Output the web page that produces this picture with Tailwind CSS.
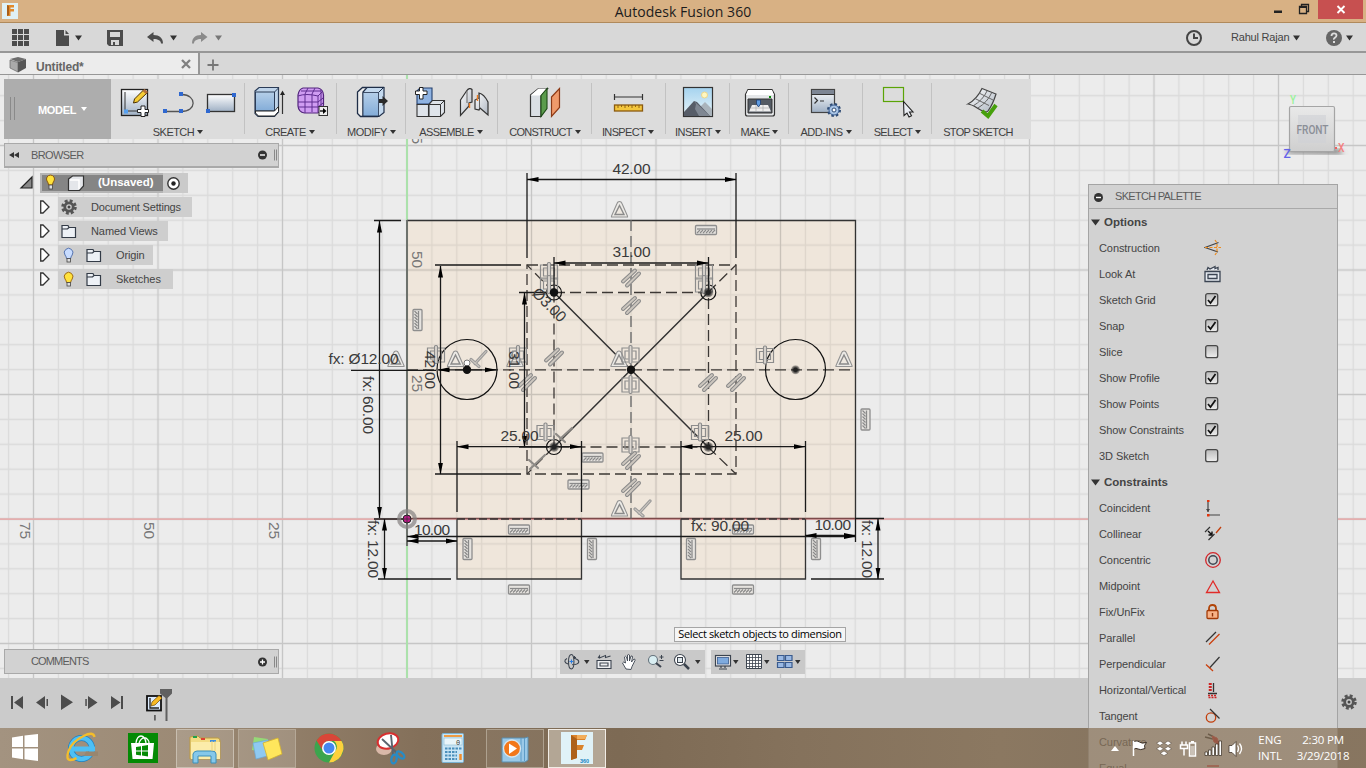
<!DOCTYPE html>
<html lang="en">
<head>
<meta charset="utf-8">
<title>Autodesk Fusion 360</title>
<script src="https://cdn.jsdelivr.net/npm/@tailwindcss/browser@4"></script>
</head>
<body class="bg-[#827a70]">
<div class="relative flex flex-col w-[1366px] h-[768px] overflow-hidden font-['Liberation_Sans',Arial,sans-serif] text-[11px] text-[#444]">

  <!-- Title bar -->
  <header class="relative flex h-[23px] shrink-0 items-center justify-center bg-[#d8b184] border-b border-[#b08a5c]">
    <svg class="absolute left-[2px] top-[3px]" width="16" height="16" viewBox="0 0 16 16"><rect width="16" height="16" fill="#dff1f6"/><path d="M5 2h7v2.500H8.500V6H12v2.500H8.500V13H5z" fill="#e28a2c"/><path d="M5 2l2 1v9l-2 1z" fill="#a95f1a"/></svg>
    <span class="font-['Open_Sans'] text-[14px] tracking-[0.050px] text-[#1c1c1c]">Autodesk Fusion 360</span>
    <svg class="absolute right-0 top-0" width="100" height="23" viewBox="1266 0 100 23"><rect x="1318" width="45" height="19" fill="#c75050"/><rect x="1274" y="10.500" width="8" height="2.500" fill="#222"/><path d="M1299.500 6.500h7v7h-7zM1301.500 6v-1.500h7v7h-1.500" fill="none" stroke="#222" stroke-width="1.300"/><path d="M1299 7h8" stroke="#222" stroke-width="2"/><path d="M1337.500 6l7 7m0-7l-7 7" stroke="#fff" stroke-width="1.900"/></svg>
  </header>

  <!-- Quick access bar -->
  <div class="relative flex h-[30px] shrink-0 items-center bg-[#d8d8d8] border-b-2 border-[#979797]">
    <svg width="240" height="28" viewBox="0 23 240 28" fill="#4c4c4c">
      <path d="M12 29h5v5h-5zM18 29h5v5h-5zM24 29h5v5h-5zM12 35h5v5h-5zM18 35h5v5h-5zM24 35h5v5h-5zM12 41h5v5h-5zM18 41h5v5h-5zM24 41h5v5h-5z"/>
      <path d="M56 30h8v5.500h5V46H56zM65.500 30l3.500 4h-3.500z"/>
      <path d="M75 35.500h7l-3.500 5zM170 35.500h7l-3.500 5z" fill="#333"/><path d="M215 35.500h7l-3.500 5z" fill="#777"/>
      <path fill-rule="evenodd" d="M107 30h16v16h-14l-2-2zm3 2v5h10v-5zm1 8v5h8v-5z"/><rect x="113" y="42" width="2" height="3"/>
      <path d="M147 37l6.500-5v3c6 0 9.500 3 9.500 8.500h-2c0-3-3-4.500-7.500-4.500v3z"/>
      <path d="M207.500 37l-6.500-5v3c-6 0-9 3-9 8.500h2c0-3 3-4.500 7-4.500v3z" fill="#8b8b8b"/>
    </svg>
    <svg class="ml-auto" width="50" height="28" viewBox="1180 23 50 28"><circle cx="1194" cy="38" r="7" fill="none" stroke="#444" stroke-width="2"/><path d="M1194 33.500v4.500h4" fill="none" stroke="#444" stroke-width="2"/></svg>
    <span class="w-[58px] mt-px pl-px whitespace-nowrap text-[11px] tracking-[-0.200px]">Rahul Rajan</span>
    <svg width="78" height="28" viewBox="1288 23 78 28"><path d="M1293 35.500h7l-3.500 5zM1346 35.500h7l-3.500 5z" fill="#333"/><circle cx="1334" cy="38" r="8" fill="#666"/><path d="M1331.500 36q0-2.700 2.500-2.700t2.500 2.300q0 1.200-1.500 2t-1 2" fill="none" stroke="#ddd" stroke-width="1.800"/><rect x="1333" y="41" width="2" height="2" fill="#ddd"/></svg>
  </div>

  <!-- Document tabs -->
  <div class="flex h-[22px] shrink-0 bg-[#d8d8d8] border-b border-[#979797]">
    <div class="flex w-[200px] items-center bg-[#ececec] border-r-2 border-[#979797]">
      <svg class="ml-2" width="22" height="20" viewBox="8 53 22 20"><path d="M10 58l8-2 8 2-8 3z" fill="#6d6d6d"/><path d="M10 59l8 2.500V71l-8-4z" fill="#aaa" stroke="#666" stroke-width=".7"/><path d="M18 61l8-3v9l-8 4.500z" fill="#575757"/></svg>
      <span class="ml-[6px] mt-[6px] text-[12px] font-bold text-[#666] tracking-[-0.200px]">Untitled*</span>
      <svg class="ml-auto mr-[6px]" width="12" height="12" viewBox="0 0 12 12"><path d="M2 2l8 8m0-8l-8 8" stroke="#808080" stroke-width="2.300"/></svg>
    </div>
    <svg width="30" height="21" viewBox="200 53 30 21"><path d="M207.500 65h11m-5.500-5.500v11" stroke="#777" stroke-width="1.800"/></svg>
  </div>

  <!-- Workspace -->
  <main class="relative h-[603px] shrink-0 overflow-hidden bg-[#ececec]">
    <svg class="block" width="1366" height="603" viewBox="0 75 1366 603" font-family="Liberation Sans, Arial, sans-serif">
      <defs>
        <pattern id="minor" x="394.550" y="506.550" width="24.900" height="24.900" patternUnits="userSpaceOnUse"><path d="M12.450 0v24.900M0 12.450h24.900" stroke="#000" stroke-opacity=".075" stroke-width="1.300" fill="none"/></pattern>
        <pattern id="major" x="344.750" y="456.750" width="124.500" height="124.500" patternUnits="userSpaceOnUse"><path d="M62.250 0v124.500M0 62.250h124.500" stroke="#000" stroke-opacity=".09" stroke-width="1.300" fill="none"/></pattern>
        <marker id="ar" markerUnits="userSpaceOnUse" markerWidth="12" markerHeight="6" refX="11.500" refY="3" orient="auto-start-reverse"><path d="M0 .5L12 3L0 5.500z"/></marker>
        <g id="hz"><rect x="-10.500" y="-4.500" width="21" height="9" rx="1" fill="#e6e3df" stroke="#8e8e8e" stroke-width="1.300"/><path d="M-9-1h18" stroke="#8a8a8a" stroke-width="1.300"/><path d="M-9 3l3-3m0 3l3-3m0 3l3-3m0 3l3-3m0 3l3-3m0 3l3-3" stroke="#8a8a8a" stroke-width="1.200"/></g>
        <g id="tr"><path d="M0-8Q1.800-8 2.500-6L8 6.500V7.500H-8V6.500L-2.500-6Q-1.800-8 0-8z" fill="#eceae6" stroke="#929292" stroke-width="1.100"/><path d="M0-4L4.500 5h-9z" fill="#eee8e0" stroke="#8a8a8a" stroke-width="1.400"/></g>
        <g id="sy" fill="none" stroke="#8c8c8c" stroke-width="1.200"><path d="M-2-7h-6.500V7H-2M2-7h6.500V7H2M-2-4h-3.500V4H-2M2-4h3.500V4H2"/><rect x="-1.500" y="-9.500" width="3" height="18" rx="1.200" fill="#ddd8d2"/></g>
        <g id="pa" stroke-linecap="round"><path d="M-8 4L4-7M-4 8L8-4" stroke="#8a8a8a" stroke-width="4"/><path d="M-8 4L4-7M-4 8L8-4" stroke="#ccc6be" stroke-width="1.800"/></g>
        <g id="pe" stroke-linecap="round" fill="none"><path d="M-7 1L1 8M-3 5L8-7" stroke="#999" stroke-width="3.200"/><path d="M-7 1L1 8M-3 5L8-7" stroke="#cbc6c0" stroke-width="1.100"/></g>
        <radialGradient id="dot"><stop offset="40%" stop-color="#222"/><stop offset="100%" stop-color="#222" stop-opacity=".25"/></radialGradient>
      </defs>
      <!-- sketch profiles -->
      <path d="M407 220h448v299H407zM457 519h124v60H457zM681 519h124v60H681z" fill="#efe6db"/>
      <rect y="75" width="1366" height="603" fill="url(#minor)"/><rect y="75" width="1366" height="603" fill="url(#major)"/>
      <path d="M0 519.200h1366" stroke="#e4aeae" stroke-width="1.800"/><path d="M407 75v603" stroke="#a9e2a9" stroke-width="1.900"/>
      <g fill="none" stroke="#333" stroke-width="1.300">
        <path d="M407 220.500h448.500V519M457 519v60h124.500v-60M681 519v60h124.500v-60"/>
        <path d="M407 220v326" stroke="#666" stroke-width="1.800"/><path d="M407 518.500h448" stroke="#7d4a4a"/>
        <path d="M457 519h124M681 519h124" stroke="#333" stroke-dasharray="8 3"/>
      </g>
      <g fill="none" stroke="#3c3835" stroke-width="1.300" stroke-dasharray="11 5">
        <path d="M527 265h209v209H527zM554 292.500h154.500V447H554zM407 369.800h448"/><path d="M631 220v299" stroke="#666"/>
        <path d="M554 292.500L527 265M708 292.500L736 265M554 447L527 474M708 447L736 474"/>
      </g>
      <path d="M554 292.500L708 447M708 292.500L554 447" stroke="#333" stroke-width="1.500"/>
      <g fill="none" stroke="#111" stroke-width="1.200"><circle cx="467" cy="369.500" r="30"/><circle cx="795.500" cy="369.500" r="30"/><circle cx="554" cy="292.500" r="7.500"/><circle cx="708.300" cy="292.500" r="7.500"/><circle cx="554" cy="447" r="7.500"/><circle cx="708.300" cy="447" r="7.500"/></g>
      <!-- constraint glyphs -->
      <use href="#hz" x="706" y="230"/><use href="#hz" x="592.500" y="457.500"/><use href="#hz" x="578.500" y="484.500"/><use href="#hz" x="519" y="529.500"/><use href="#hz" x="743" y="529.500"/><use href="#hz" x="519" y="589.500"/><use href="#hz" x="743" y="589.500"/>
      <use href="#hz" transform="translate(417.500 320) rotate(90)"/>
      <g><use href="#hz" transform="translate(865.500 419.500) rotate(90)"/><use href="#hz" transform="translate(467.500 549) rotate(90)"/><use href="#hz" transform="translate(592 549) rotate(90)"/><use href="#hz" transform="translate(691 549) rotate(90)"/><use href="#hz" transform="translate(816 549) rotate(90)"/></g>
      <use href="#tr" x="619.500" y="209.500"/><use href="#tr" x="396" y="359"/><use href="#tr" x="455.500" y="359"/><use href="#tr" x="515" y="359"/><use href="#tr" x="619" y="359"/><use href="#tr" x="844" y="359"/><use href="#tr" x="619.500" y="508.500"/>
      <use href="#sy" x="549" y="272"/><use href="#sy" x="549" y="285"/><use href="#sy" x="704" y="272"/><use href="#sy" x="704" y="285"/><use href="#sy" x="436" y="355"/><use href="#sy" x="518" y="355"/><use href="#sy" x="630.500" y="355"/><use href="#sy" x="630.500" y="385"/><use href="#sy" x="765" y="355.500"/><use href="#sy" x="545.500" y="432.500"/><use href="#sy" x="700" y="432.500"/><use href="#sy" x="630.500" y="445"/>
      <use href="#pa" x="631" y="277.500"/><use href="#pa" x="631" y="305"/><use href="#pa" x="554" y="356.500"/><use href="#pa" x="527" y="382"/><use href="#pa" x="708" y="382"/><use href="#pa" x="736" y="382"/><use href="#pa" x="631" y="460"/><use href="#pa" x="631" y="487"/>
      <use href="#pe" x="478" y="358.500"/><use href="#pe" x="642" y="508"/>
      <path d="M530 469l15-14m-16 5l9 8M556 434l9 8m-5-3l12-11" stroke="#8d8a86" stroke-width="2.200" stroke-linecap="round"/>
      <!-- dimensions -->
      <g stroke="#1a1a1a" stroke-width="1.300" fill="none">
        <path d="M527 173v85M736 173v85M554 257v34M708.500 257v34M374 220.500h27M435 265h86M435 474h86M519 292.500h27M519 447h30M457 441v71M581.500 441v71M681 441v71M805.500 441v71M378 579h73M811 579h73M855.500 519v23M374 519h33M855 518.500h29"/>
        <g marker-start="url(#ar)" marker-end="url(#ar)"><path d="M527 179.500h209"/><path d="M554 263h154"/><path d="M379.500 221v297"/><path d="M440.500 266v208"/><path d="M524.500 293v154"/><path d="M457 446.700h124"/><path d="M681 446.700h124"/><path d="M407 536.500h448"/><path d="M407 541h50"/><path d="M805 535.500h50"/><path d="M384.500 519v60"/><path d="M878 519v60"/><path d="M438 369.800h58"/></g>
        <path d="M351 370.300h85"/>
      </g>
      <circle cx="467" cy="363" r="3" fill="#fff" stroke="#777"/>
      <g fill="#111"><circle cx="467" cy="369.800" r="4.200"/><circle cx="631" cy="369.800" r="4.200"/><circle cx="554" cy="292.500" r="4.200"/></g>
      <g fill="url(#dot)"><circle cx="795.500" cy="369.800" r="4.500"/><circle cx="708.300" cy="292.500" r="5"/><circle cx="554" cy="447" r="5"/><circle cx="708.300" cy="447" r="5"/></g>
      <circle cx="407" cy="519" r="8" fill="none" stroke="#858080" stroke-opacity=".7" stroke-width="4"/><circle cx="407" cy="519" r="4" fill="#c0188a" stroke="#222"/><path d="M403 519h8m-4-4v8" stroke="#333" stroke-width=".8"/>
      <g font-size="15.500" fill="#3a3a3a">
        <text x="612.500" y="173.500" textLength="38">42.00</text><text x="612.500" y="257" textLength="38">31.00</text>
        <text x="500.500" y="441" textLength="38">25.00</text><text x="724.500" y="441" textLength="38">25.00</text>
        <text x="414" y="535" textLength="36">10.00</text><text x="814.500" y="529.500" textLength="36.500">10.00</text>
        <text x="691" y="531" textLength="58">fx: 90.00</text><text x="328.500" y="364" textLength="70">fx: Ø12.00</text>
        <text transform="translate(363 376) rotate(90)" textLength="58">fx: 60.00</text><text transform="translate(368 520) rotate(90)" textLength="58">fx: 12.00</text><text transform="translate(861.500 520) rotate(90)" textLength="58">fx: 12.00</text>
        <text transform="translate(425 351) rotate(90)" textLength="38">42.00</text><text transform="translate(509 351) rotate(90)" textLength="38">31.00</text>
        <text transform="translate(531 294) rotate(45)" textLength="41">Ø3.00</text>
        <g fill="#777"><text transform="translate(411.500 251) rotate(90)" textLength="17">50</text><text transform="translate(411.500 375) rotate(90)" textLength="17">25</text><text transform="translate(411.500 127) rotate(90)" textLength="17">75</text><text transform="translate(20 522) rotate(90)" textLength="17">75</text><text transform="translate(144 522) rotate(90)" textLength="17">50</text><text transform="translate(268.500 522) rotate(90)" textLength="17">25</text></g>
      </g>
      <!-- view cube -->
      <defs><linearGradient id="cube" x2="0" y2="1"><stop stop-color="#e9e9e9"/><stop offset="1" stop-color="#cfcfcf"/></linearGradient><filter id="soft"><feGaussianBlur stdDeviation="2.500"/></filter></defs>
      <path d="M1284 153l8-4h46l6 5z" fill="#777" filter="url(#soft)"/><rect x="1289.500" y="106.500" width="45" height="45" rx="1.500" fill="url(#cube)" stroke="#a5a5a5" stroke-width="1.200"/><rect x="1298" y="115" width="28" height="28" fill="#ced1d6" fill-opacity=".6"/>
      <text x="1296.500" y="133.500" font-family="Roboto" font-weight="500" font-size="12" fill="#8b8f97" textLength="32" lengthAdjust="spacingAndGlyphs">FRONT</text>
      <g font-family="Roboto" font-weight="500" font-size="12"><text x="1290" y="104" fill="#98f398" textLength="6" lengthAdjust="spacingAndGlyphs">Y</text><text x="1338" y="151.500" fill="#f58080" textLength="6.500" lengthAdjust="spacingAndGlyphs">X</text><text x="1283.500" y="158" fill="#6464ea">Z</text></g><rect x="1335" y="147" width="2" height="2" fill="#f06060"/>
    </svg>

    <!-- Ribbon -->
    <nav class="absolute left-1 top-1 flex h-[60px] w-[1027px] bg-[#dcdcdc] text-[#3f3f3f]">
      <div class="flex w-[107px] items-center bg-[#adadad] font-bold text-white">
        <svg width="34" height="60" viewBox="0 0 34 60"><path d="M6.500 18v23M10.500 18v23" stroke="#8a8a8a"/></svg>
        <span class="w-[40px] pt-[2px] tracking-[-0.300px] text-[11px]">MODEL</span>
        <svg width="12" height="60" viewBox="0 0 12 60"><path d="M3 28h6l-3 4z" fill="#fff"/></svg>
      </div>

      <div class="relative flex w-[134px] flex-col">
        <svg width="134" height="46" viewBox="111 79 134 46"><defs><linearGradient id="pg" x2="0" y2="1"><stop stop-color="#fff"/><stop offset="1" stop-color="#9fb0c4"/></linearGradient><linearGradient id="bl" x2="0" y2="1"><stop stop-color="#b5cfe9"/><stop offset="1" stop-color="#83acd8"/></linearGradient><linearGradient id="wg" x2="1" y2="1"><stop stop-color="#fff"/><stop offset="1" stop-color="#aeb6c1"/></linearGradient></defs>
          <rect x="121.500" y="89.500" width="26" height="26" fill="url(#pg)" stroke="#222" stroke-width="1.300"/><path d="M125 92v19h19" fill="none" stroke="#333"/><rect x="124" y="109.500" width="4" height="4" fill="#55a0f0"/><path d="M133.500 103l1-4 9-9 3.500 3-9.500 9z" fill="#f6cd35" stroke="#4a3000"/><path d="M142.500 91l2-2 3.500 3-2 2z" fill="#b4713d"/><path d="M141 106h4v3.500h3.500v3H145v4h-4v-4h-3.500v-3h3.500z" fill="#fff" stroke="#222"/>
          <path d="M165 111.500h16c16 0 16-16.500 1-17" fill="none" stroke="#555" stroke-width="1.300"/><path d="M163 109h4v4h-4zM179 109h4v4h-4zM179 92h4v4h-4z" fill="#2f68d0"/>
          <rect x="207.500" y="94.500" width="27" height="17" fill="url(#pg)" stroke="#333" stroke-width="1.300"/><path d="M206 109h4v4h-4zM232 93h4v4h-4z" fill="#2f68d0"/></svg>
        <div class="flex h-[14px] items-center justify-center gap-[3px] pl-0"><span class="tracking-[-0.550px]">SKETCH</span><i class="border-x-[3px] border-t-4 border-x-transparent border-t-[#333]"></i></div>
        <i class="absolute right-0 top-1 h-[51px] w-px bg-[#c2c2c2]"></i>
      </div>

      <div class="relative flex w-[92px] flex-col">
        <svg width="92" height="46" viewBox="245 79 92 46"><path d="M255 91l4-3.500h19.500V112l-4 4.500H258l-3-3z" fill="#bfd4ea" stroke="#2b3c57" stroke-width="1.200"/><path d="M255.500 92h19v19h-19z" fill="url(#bl)" stroke="#2b3c57"/><path d="M255.500 111h19l4-4.500v5l-4 4.500h-16l-3-3z" fill="#fff" stroke="#222"/><path d="M274.500 92l4-4" stroke="#2b3c57"/><path d="M282.500 114V93" stroke="#333" stroke-width="1.200"/><path d="M280 95h5l-2.500-4.500z" fill="#222"/>
          <path d="M303 88h15q5 1 5.500 7v10q-1 6-6 8h-13q-6-1-6.500-7V95q1-6 5-7z" fill="#cf9cf2" stroke="#52257c" stroke-width="1.200"/><path d="M298 96q8-3 20 0v16M305 95v18M312 94v18M298 102h20M298 107h20M301 91h20M305 94l3-6M312 94l3-6M318 96l5-5M318 102l5-4M318 107l5-4M321 90v20" fill="none" stroke="#5e2c90" stroke-width="1"/><rect x="319" y="106.500" width="8.500" height="9" fill="#eee" stroke="#333"/><path d="M320 111h4" stroke="#222" stroke-width="1.500"/><path d="M323 108l3.500 3-3.500 3z"/></svg>
        <div class="flex h-[14px] items-center justify-center gap-[3px] pr-[2px]"><span class="tracking-[-0.550px]">CREATE</span><i class="border-x-[3px] border-t-4 border-x-transparent border-t-[#333]"></i></div>
        <i class="absolute right-0 top-1 h-[51px] w-px bg-[#c2c2c2]"></i>
      </div>

      <div class="relative flex w-[69px] flex-col">
        <svg width="69" height="46" viewBox="337 79 69 46"><path d="M357.500 92l5-4.500h21l-2 26-4 3h-17l-3-3z" fill="#eee" stroke="#1f2e48" stroke-width="1.300"/><path d="M363 92l4-4.500h17v25l-5 4h-16z" fill="#c4d9ee" stroke="#1f2e48" stroke-width="1.200"/><path d="M363 92.500h15.500v23.500H363z" fill="url(#bl)" stroke="#1f2e48" stroke-width=".8"/><path d="M378.500 92.500l5-5" stroke="#1f2e48"/><path d="M379 99h3.500v-3l5.500 5-5.500 5v-3H379z" fill="#2a2a2a"/></svg>
        <div class="flex h-[14px] items-center justify-center gap-[3px]"><span class="tracking-[-0.500px]">MODIFY</span><i class="border-x-[3px] border-t-4 border-x-transparent border-t-[#333]"></i></div>
        <i class="absolute right-0 top-1 h-[51px] w-px bg-[#c2c2c2]"></i>
      </div>

      <div class="relative flex w-[92px] flex-col">
        <svg width="92" height="46" viewBox="406 79 92 46"><path d="M417 91l3-3h12v13l-3 3h-12z" fill="#8fb3e2" stroke="#24406e" stroke-width="1.100"/><path d="M417 104.500h11.500v12H417zM429 104.500l3.500-4h12v12l-4 4h-11.500z" fill="#dfe4ea" stroke="#333" stroke-width="1.100"/><path d="M429 104.500h11.500v12M440.500 104.500l4-4" fill="none" stroke="#333"/><path d="M419.500 87.500h3.500V91h4v3.500h-4V99h-3.500v-4.500h-4V91h4z" fill="#fff" stroke="#222"/>
          <path d="M460.500 100l6-9q3-4 5.500-1.500V102l-3 1v3l-8.500 9.500z" fill="url(#wg)" stroke="#333" stroke-width="1.200"/><path d="M467 91v12" stroke="#666"/><path d="M488 102v13l-8-7-1 2-4-1v-9l4-2V93q5 1 9 9z" fill="url(#wg)" stroke="#333" stroke-width="1.200"/><path d="M479.500 94v14" stroke="#666"/><path d="M469.500 103v5M477.500 95v6" stroke="#ef7d22" stroke-width="1.400"/></svg>
        <div class="flex h-[14px] items-center justify-center gap-[3px] pr-[2px]"><span class="tracking-[-0.600px]">ASSEMBLE</span><i class="border-x-[3px] border-t-4 border-x-transparent border-t-[#333]"></i></div>
        <i class="absolute right-0 top-1 h-[51px] w-px bg-[#c2c2c2]"></i>
      </div>

      <div class="relative flex w-[94px] flex-col">
        <svg width="94" height="46" viewBox="498 79 94 46"><path d="M530.500 95l8-6.500h9l-6.500 7v21h-10.500z" fill="#dadfe4" stroke="#333" stroke-width="1.200"/><path d="M530.500 95.500h10.500l6-7h-8.500z" fill="#fff"/><path d="M541 95.500l6-7v20l-6 8z" fill="#5b9c4c" stroke="#1e4a17" stroke-width="1.100"/><path d="M551.500 97l8-8.500v19l-8 9z" fill="#ef9a6b" stroke="#8d3a16" stroke-width="1.200"/></svg>
        <div class="flex h-[14px] items-center justify-center gap-[3px]"><span class="tracking-[-0.720px]">CONSTRUCT</span><i class="border-x-[3px] border-t-4 border-x-transparent border-t-[#333]"></i></div>
        <i class="absolute right-0 top-1 h-[51px] w-px bg-[#c2c2c2]"></i>
      </div>

      <div class="relative flex w-[74px] flex-col">
        <svg width="74" height="46" viewBox="592 79 74 46"><path d="M614.500 97h28M614.500 94v6M642.500 94v6" stroke="#333" stroke-width="1.200"/><rect x="614.500" y="105" width="28" height="6" fill="#f3c63c" stroke="#8b5a0e" stroke-width="1.300"/><path d="M618 105v3m3.500-3v2m3.500-2v3m3.500-3v2m3.500-2v3m3.500-3v2m3.500-2v3" stroke="#8b5a0e" stroke-width=".9"/></svg>
        <div class="flex h-[14px] items-center justify-center gap-[3px] pr-[2px]"><span class="tracking-[-0.650px]">INSPECT</span><i class="border-x-[3px] border-t-4 border-x-transparent border-t-[#333]"></i></div>
        <i class="absolute right-0 top-1 h-[51px] w-px bg-[#c2c2c2]"></i>
      </div>

      <div class="relative flex w-[64px] flex-col">
        <svg width="64" height="46" viewBox="666 79 64 46"><defs><linearGradient id="sky" x2="0" y2="1"><stop stop-color="#a5d3ef"/><stop offset="1" stop-color="#e8f4f8"/></linearGradient></defs><rect x="683.500" y="87.500" width="29" height="29" fill="url(#sky)" stroke="#333" stroke-width="1.200"/><path d="M695 112l10-10 7 7v7h-15z" fill="#a9b3bb"/><path d="M684 112l10-11 3 1 13 14h-26z" fill="#575d68"/><path d="M694 101l2 3-1 5 4 7h11z" fill="#7f8792"/><circle cx="704.500" cy="95" r="3" fill="#fff7c0" stroke="#ecd68a"/></svg>
        <div class="flex h-[14px] items-center justify-center gap-[3px]"><span class="tracking-[-0.550px]">INSERT</span><i class="border-x-[3px] border-t-4 border-x-transparent border-t-[#333]"></i></div>
        <i class="absolute right-0 top-1 h-[51px] w-px bg-[#c2c2c2]"></i>
      </div>

      <div class="relative flex w-[59px] flex-col">
        <svg width="59" height="46" viewBox="730 79 59 46"><path d="M748 89.500h24l2.500 5V114q0 2-2 2h-25q-2 0-2-2V94.500z" fill="#e5e7e9" stroke="#333" stroke-width="1.200"/><path d="M746 95h28l-2-5h-24z" fill="#fff"/><path d="M748 99h24v14h-24z" fill="#545b64" stroke="#333"/><path d="M752 105h16l3 6.500h-22z" fill="#eee"/><path d="M751 108h18M756 105v6M763 105v6" stroke="#aaa" stroke-width=".7"/><path d="M756.500 100h4v4l-2 3-2-3z" fill="#5f9be0" stroke="#1e3d70" stroke-width=".8"/><rect x="769" y="96" width="2" height="2" fill="#0b8a0b"/></svg>
        <div class="flex h-[14px] items-center justify-center gap-[3px]"><span class="tracking-[-0.550px]">MAKE</span><i class="border-x-[3px] border-t-4 border-x-transparent border-t-[#333]"></i></div>
        <i class="absolute right-0 top-1 h-[51px] w-px bg-[#c2c2c2]"></i>
      </div>

      <div class="relative flex w-[74px] flex-col">
        <svg width="74" height="46" viewBox="789 79 74 46"><rect x="811.500" y="89.500" width="23" height="23" fill="url(#pg)" stroke="#444" stroke-width="1.200"/><path d="M812 90h22v4h-22z" fill="#7d8694"/><path d="M811.500 94.500h23" stroke="#333"/><path d="M814.500 97.500l3 3-3 3M820 101h4" fill="none" stroke="#333" stroke-width="1.200"/><circle cx="834" cy="110" r="5.500" fill="#a8c4e6" stroke="#2d4a73" stroke-width="3" stroke-dasharray="2.300 2"/><circle cx="834" cy="110" r="5" fill="#a8c4e6" stroke="#3d5f91"/><circle cx="834" cy="110" r="2" fill="#fff" stroke="#2d4a73"/></svg>
        <div class="flex h-[14px] items-center justify-center gap-[3px]"><span class="tracking-[-0.450px]">ADD-INS</span><i class="border-x-[3px] border-t-4 border-x-transparent border-t-[#333]"></i></div>
        <i class="absolute right-0 top-1 h-[51px] w-px bg-[#c2c2c2]"></i>
      </div>

      <div class="relative flex w-[69px] flex-col">
        <svg width="69" height="46" viewBox="863 79 69 46"><rect x="883.500" y="87.500" width="20" height="14" fill="none" stroke="#5aa406" stroke-width="1.200"/><path d="M903.500 101.500l.5 14 3-2.500 2 4 2.500-1.300-2-3.700h3.500z" fill="#e9ecf2" stroke="#222" stroke-width="1.100"/></svg>
        <div class="flex h-[14px] items-center justify-center gap-[3px]"><span class="tracking-[-0.700px]">SELECT</span><i class="border-x-[3px] border-t-4 border-x-transparent border-t-[#333]"></i></div>
        <i class="absolute right-0 top-1 h-[51px] w-px bg-[#c2c2c2]"></i>
      </div>

      <div class="flex w-[99px] flex-col">
        <svg width="99" height="46" viewBox="932 79 99 46"><path d="M982 88.500l14 5.500q-3 10-8 17-2 3-14-5-5-2-6-2 9-5 14-15.500z" fill="url(#wg)" stroke="#444" stroke-width="1.200"/><path d="M979 93l14 7M975 98.500l14 7M987 91q-4 9-14 15M991.500 93q-4 9-13.500 15" fill="none" stroke="#666"/><path d="M982 111l6 5 8-11" fill="none" stroke="#46a00c" stroke-width="4"/></svg>
        <div class="flex h-[14px] items-center justify-center pr-[7px]"><span class="tracking-[-0.700px]">STOP SKETCH</span></div>
      </div>
    </nav>

    <!-- Browser panel -->
    <section class="absolute left-1 top-[68px] w-[275px]">
      <div class="flex h-[25px] items-center border border-[#a9a9a9] border-b-2 bg-[#d2d2d2] text-[#5c5c5c]">
        <svg width="26" height="20" viewBox="0 0 26 20"><path d="M9 7v6l-5-3zM14 7v6l-5-3z" fill="#333"/></svg><span class="tracking-[-0.600px]">BROWSER</span>
        <svg class="ml-auto" width="24" height="20" viewBox="0 0 24 20"><circle cx="8.500" cy="10" r="4.500" fill="#333"/><path d="M6 10h5" stroke="#fff" stroke-width="1.400"/><path d="M20.500 4.500v11M22.500 4.500v11" stroke="#888"/></svg>
      </div>
      <div class="flex h-[20px] mt-[5px] items-center">
        <svg width="36" height="20" viewBox="4 173 36 20"><path d="M32 177v11H21z" fill="#888" stroke="#222" stroke-width="1.200"/></svg>
        <div class="flex h-[20px] w-[148px] items-center bg-[#cacaca]"><div class="flex h-[20px] w-[123px] items-center border-2 border-r-0 border-[#b5b5b5] bg-[#858585] text-[#fff] font-bold">
          <svg width="54" height="18" viewBox="42 174 54 18"><path d="M47 181a4 4 0 1 1 7 0q-1.500 2-1.500 4h-4q0-2-1.500-4z" fill="#ffe23c" stroke="#8c5a10"/><rect x="49" y="185" width="3.500" height="4" fill="#ddd" stroke="#444" stroke-width=".8"/><path d="M68.500 179l4-3h11v10l-4 4.500h-11z" fill="#e4e6ea" stroke="#333" stroke-width="1.200"/><path d="M70 180h9v9" fill="none" stroke="#fff" stroke-width="1.500"/></svg><span class="ml-[2px] text-[11.500px]">(Unsaved)</span></div>
          <svg width="20" height="20" viewBox="0 0 20 20"><circle cx="10.500" cy="10.500" r="5.700" fill="#fff" stroke="#333" stroke-width="1.400"/><circle cx="10.500" cy="10.500" r="2.200" fill="#222"/></svg></div>
      </div>
      <div class="mt-1 flex h-[20px] items-center">
        <svg width="54" height="20" viewBox="0 0 54 20"><path d="M36.700 4h2.300l6 6-6 6h-2.300z" fill="#fff" stroke="#333" stroke-width="1.300"/></svg>
        <div class="flex h-[20px] w-[134px] items-center bg-[#cecece]"><svg width="33" height="20" viewBox="0 0 33 20"><circle cx="11" cy="10" r="6" fill="none" stroke="#555" stroke-width="3.500" stroke-dasharray="2.700 2"/><circle cx="11" cy="10" r="4.200" fill="none" stroke="#555" stroke-width="2.800"/><circle cx="11" cy="10" r="1.500" fill="#444"/></svg><span class="tracking-[-0.180px]">Document Settings</span></div>
      </div>
      <div class="mt-1 flex h-[20px] items-center">
        <svg width="54" height="20" viewBox="0 0 54 20"><path d="M36.700 4h2.300l6 6-6 6h-2.300z" fill="#fff" stroke="#333" stroke-width="1.300"/></svg>
        <div class="flex h-[20px] w-[110px] items-center bg-[#cecece]"><svg width="33" height="20" viewBox="0 0 33 20"><path id="folder" d="M4 16.500v-12h6l1 2h6.500v10zM4 8h5.500l1.500-1.500" fill="#edf1f6" stroke="#333b47" stroke-width="1.200"/></svg><span class="tracking-[-0.080px]">Named Views</span></div>
      </div>
      <div class="mt-1 flex h-[20px] items-center">
        <svg width="54" height="20" viewBox="0 0 54 20"><path d="M36.700 4h2.300l6 6-6 6h-2.300z" fill="#fff" stroke="#333" stroke-width="1.300"/></svg>
        <div class="flex h-[20px] w-[95px] items-center bg-[#cecece]"><svg width="58" height="20" viewBox="0 0 58 20"><path d="M7 10a4.300 4.300 0 1 1 7.200 0q-1.500 2-1.500 3.500H8.500Q8.500 12 7 10z" fill="#c8dcff" stroke="#5674b0"/><rect x="9" y="13.500" width="3.500" height="3.500" fill="#ddd" stroke="#444" stroke-width=".8"/><use href="#folder" x="25"/></svg><span class="tracking-[-0.150px]">Origin</span></div>
      </div>
      <div class="mt-1 flex h-[20px] items-center">
        <svg width="54" height="20" viewBox="0 0 54 20"><path d="M36.700 4h2.300l6 6-6 6h-2.300z" fill="#fff" stroke="#333" stroke-width="1.300"/></svg>
        <div class="flex h-[20px] w-[115px] items-center bg-[#cecece]"><svg width="58" height="20" viewBox="0 0 58 20"><path d="M7 10a4.300 4.300 0 1 1 7.200 0q-1.500 2-1.500 3.500H8.500Q8.500 12 7 10z" fill="#ffe23c" stroke="#a06c14"/><rect x="9" y="13.500" width="3.500" height="3.500" fill="#ddd" stroke="#444" stroke-width=".8"/><use href="#folder" x="25"/></svg><span class="tracking-[-0.050px]">Sketches</span></div>
      </div>
    </section>

    <!-- Comments panel -->
    <div class="absolute left-1 top-[574px] flex h-[25px] w-[275px] items-center border border-[#a9a9a9] bg-[#d2d2d2] text-[#5c5c5c]">
      <span class="ml-[26px] tracking-[-0.850px]">COMMENTS</span>
      <svg class="ml-auto" width="24" height="20" viewBox="0 0 24 20"><circle cx="8.500" cy="10" r="4.500" fill="#333"/><path d="M6 10h5M8.500 7.500v5" stroke="#fff" stroke-width="1.300"/><path d="M20.500 4.500v11M22.500 4.500v11" stroke="#888"/></svg>
    </div>

    <!-- Prompt -->
    <div class="absolute left-[674px] top-[552px] flex h-[15px] w-[172px] items-center justify-center border border-[#a5a5a5] bg-[#f5f5f5] font-['Open_Sans'] text-[11px] tracking-[-0.380px] whitespace-nowrap text-black">Select sketch objects to dimension</div>

    <!-- Navigation bar -->
    <div class="absolute left-[560px] top-[575px] flex gap-[6px]">
      <svg class="bg-[#c9c9c9]" width="145" height="24" viewBox="560 650 145 24" fill="none" stroke="#3c444f" stroke-width="1.100"><path d="M571.500 654.500c3 0 3.500 14 0 14.500-4 0-4-14.500 0-14.500zM567 658.500c-3 1.500-3 4.500 1 5.500M575 658.500c5 1.500 5 5 0 6l-3 .3"/><path d="M571.500 659.500v4m-2-2h4" stroke="#2b7de0"/><path d="M574.500 656v3m-1.500-1.500h3"/>
        <path d="M597 660.500h14v8h-14zM600 663h8v3h-8zM598 658l1.500-2v2l6-2.500v2l5-1.500" fill="#eef0f3"/>
        <path d="M626 669l-3.500-6q1-2 3 0l-1-6q1-1.500 2 0l1 4v-6q1.500-1 2 0v6l1.500-5q1.500-.5 1.500 1l-1 5 2.500-3q1.500 0 1 1.500l-3 6-1 3z" fill="#fff" stroke-width=".9"/>
        <circle cx="653" cy="660" r="4.500" fill="#d9eef2" stroke="#65727c"/><path d="M656 663l5 4" stroke-width="2.200"/><path d="M659.500 657h4m-2-2v4m-2 1.500h4" stroke-width="1"/>
        <circle cx="680" cy="660" r="5.500" fill="#fff"/><rect x="677.500" y="657.500" width="5" height="5" fill="#dfe8ec" stroke-width="1"/><path d="M684 664l5 5" stroke-width="2.500"/>
        <path d="M584 660h5.500l-2.700 4zM695 660h5.500l-2.700 4z" fill="#333" stroke="none"/></svg>
      <svg class="bg-[#c9c9c9]" width="94" height="24" viewBox="711 650 94 24" fill="none" stroke="#3c444f" stroke-width="1.200"><rect x="715.500" y="655.500" width="15" height="10.500" fill="#eee"/><rect x="717.500" y="657.500" width="11" height="6.500" fill="#7eaade" stroke="#3a5b8e" stroke-width=".8"/><path d="M721 666v2m4-2v2M719 669h8"/><path d="M746.500 654.500h15v14h-15z" fill="#fff" stroke-width="1"/><path d="M749.500 654v15m3-15v15m3-15v15m3-15v15M746 657.500h16m-16 3h16m-16 3h16m-16 3h16" stroke-width=".8"/><path d="M777.500 655.500h6.500v5h-6.500zM785.500 655.500h6.500v5h-6.500zM777.500 662.500h6.500v5h-6.500zM785.500 662.500h6.500v5h-6.500z" fill="#9ab9e4" stroke="#3a5b8e"/><path d="M733 660h5.500l-2.700 4zM764 660h5.500l-2.700 4zM795 660h5.500l-2.700 4z" fill="#333" stroke="none"/></svg>
    </div>
  </main>

  <!-- Timeline -->
  <div class="flex h-[50px] shrink-0 items-center justify-between bg-[#cbcbcb]">
    <svg width="200" height="50" viewBox="0 678 200 50" fill="#4c4c4c"><path d="M11 696h2v13h-2zM23 696v13l-9-6.500zM45 696v13l-9-6.500zM46.500 699h1.500v7h-1.500zM61 694.500l12 7.800-12 7.800zM88 696l9.500 6.500-9.500 6.500zM85.300 699h1.500v7h-1.500zM111 696l9.500 6.500-9.500 6.500zM121 696h2v13h-2z"/><rect x="147" y="696" width="14" height="14.500" fill="#dcecff" stroke="#111" stroke-width="1.800"/><path d="M150 698v10h9" fill="none" stroke="#222" stroke-width="1.300"/><path d="M151 706l1-4 7-6.500 3 2.500-7 7z" fill="#f7ba25" stroke="#6b4708" stroke-width=".7"/><path d="M160 689h12v4.500l-4.500 4.500V721h-2v-23l-5.500-4.500zM154 715h1.800v5.500H154z" fill="#606060"/></svg>
    <svg width="30" height="50" viewBox="1336 678 30 50"><circle cx="1349" cy="702" r="6" fill="none" stroke="#555" stroke-width="3.500" stroke-dasharray="2.700 2"/><circle cx="1349" cy="702" r="4.300" fill="none" stroke="#555" stroke-width="2.800"/><circle cx="1349" cy="702" r="1.500" fill="#444"/></svg>
  </div>

  <!-- Sketch palette, runs on beneath the translucent taskbar -->
  <aside class="absolute left-[1088px] top-[184px] h-[600px] w-[250px] border border-[#a4a4a4] bg-[#d2d2d2] text-[#444]">
    <div class="flex h-[24px] items-center border-b border-[#a9a9a9] text-[#5c5c5c]"><svg width="26" height="20" viewBox="0 0 26 20"><circle cx="9.500" cy="10.500" r="4.500" fill="#333"/><path d="M7 10.500h5" stroke="#fff" stroke-width="1.400"/></svg><span class="tracking-[-0.700px]">SKETCH PALETTE</span></div>
    <div class="flex h-[26px] items-center pt-[2px] text-[11.500px] font-bold"><svg width="15" height="20" viewBox="0 0 15 20"><path d="M2 6.500h9l-4.500 6z" fill="#333"/></svg><span>Options</span></div>
    <div class="grid grid-cols-[105px_30px] auto-rows-[26px] items-center pl-[10px] tracking-[-0.080px]">
      <span>Construction</span><svg width="18" height="18" viewBox="0 0 18 18"><path d="M14.500 3.500L1 8.500 14 13" fill="none" stroke="#444" stroke-width="1.300"/><path d="M1 8.500h16M11 1l2 3v9l-2 3" fill="none" stroke="#ef8c1c" stroke-width="1.200" stroke-dasharray="3 1.500"/></svg>
      <span>Look At</span><svg width="18" height="18" viewBox="0 0 18 18"><path d="M1 6.500h15v10H1zM4 9.500h9v4H4zM3 5l1-2.500 2 1.500 5-2.500v2l3-1V5" fill="#e6eaf0" stroke="#3b4452" stroke-width="1.300"/></svg>
      <span>Sketch Grid</span><svg width="18" height="18" viewBox="0 0 18 18"><defs><linearGradient id="cb" x2="0" y2="1"><stop stop-color="#bbb"/><stop offset="1" stop-color="#eee"/></linearGradient><g id="box"><rect x="1.700" y="2.700" width="12" height="12" rx="2" fill="url(#cb)" stroke="#484848" stroke-width="1.300"/></g><g id="chk"><use href="#box"/><path d="M4 9l2.500 3L11.500 5" fill="none" stroke="#111" stroke-width="1.700"/></g></defs><use href="#chk"/></svg>
      <span>Snap</span><svg width="18" height="18"><use href="#chk"/></svg>
      <span>Slice</span><svg width="18" height="18"><use href="#box"/></svg>
      <span>Show Profile</span><svg width="18" height="18"><use href="#chk"/></svg>
      <span>Show Points</span><svg width="18" height="18"><use href="#chk"/></svg>
      <span>Show Constraints</span><svg width="18" height="18"><use href="#chk"/></svg>
      <span>3D Sketch</span><svg width="18" height="18"><use href="#box"/></svg>
    </div>
    <div class="flex h-[26px] items-center pt-[2px] text-[11.500px] font-bold"><svg width="15" height="20" viewBox="0 0 15 20"><path d="M2 6.500h9l-4.500 6z" fill="#333"/></svg><span>Constraints</span></div>
    <div class="grid grid-cols-[105px_30px] auto-rows-[26px] items-center pl-[10px] tracking-[-0.080px] whitespace-nowrap">
      <span>Coincident</span><svg width="18" height="18" viewBox="0 0 18 18"><path d="M4 3v10M4 16h12" stroke="#444" stroke-width="1.200"/><path d="M2 10h4l-2 3z" fill="#444"/><path d="M3 1h2.500v2H3zM3 15h2.500v2.500H3z" fill="#e5340b"/></svg>
      <span>Collinear</span><svg width="18" height="18" viewBox="0 0 18 18"><path d="M1 7l5-5M4.500 15l6-6" stroke="#333" stroke-width="1.200"/><path d="M12 8l5-6" stroke="#c33d0a" stroke-width="1.300"/><path d="M4 6l4 4m0-3.500V10H4.500" stroke="#111" stroke-width="1.400" fill="none"/></svg>
      <span>Concentric</span><svg width="18" height="18" viewBox="0 0 18 18"><circle cx="9" cy="9" r="7.300" fill="none" stroke="#d3262b" stroke-width="1.300"/><circle cx="9" cy="9" r="4.200" fill="none" stroke="#3f4853" stroke-width="1.500"/></svg>
      <span>Midpoint</span><svg width="18" height="18" viewBox="0 0 18 18"><path d="M9 4l6.500 11.500h-13z" fill="none" stroke="#e12b28" stroke-width="1.300"/></svg>
      <span>Fix/UnFix</span><svg width="18" height="18" viewBox="0 0 18 18"><path d="M5 8V5.500Q5 2 8.500 2T12 5.500V8" fill="none" stroke="#b14408" stroke-width="1.800"/><rect x="3" y="7.500" width="11" height="8" rx="1" fill="#f8b287" stroke="#a33a06" stroke-width="1.300"/><path d="M8.500 10v3.500" stroke="#90330a" stroke-width="1.400"/></svg>
      <span>Parallel</span><svg width="18" height="18" viewBox="0 0 18 18"><path d="M2 13L12 3" stroke="#333" stroke-width="1.200"/><path d="M5 15.500L15.500 5" stroke="#cb3f0c" stroke-width="1.300"/></svg>
      <span>Perpendicular</span><svg width="18" height="18" viewBox="0 0 18 18"><path d="M5.500 13L15.500 2" stroke="#333" stroke-width="1.200"/><path d="M2 9.500l7 6.500" stroke="#cb3f0c" stroke-width="1.300"/></svg>
      <span>Horizontal/Vertical</span><svg width="18" height="18" viewBox="0 0 18 18"><path d="M9.500 2v9M4 12.500h9" stroke="#333" stroke-width="1.300"/><path d="M7 2v9M5.500 2v9" stroke="#cc2525" stroke-width="1.500" stroke-dasharray="2 1"/><path d="M4 14.500h9M4.500 16.500h8" stroke="#cc2525" stroke-width="1.400" stroke-dasharray="2 1"/></svg>
      <span>Tangent</span><svg width="18" height="18" viewBox="0 0 18 18"><circle cx="7" cy="10.500" r="4.700" fill="none" stroke="#c3400d" stroke-width="1.300"/><path d="M6 2l9.500 9.500" stroke="#333" stroke-width="1.200"/></svg>
      <span>Curvature</span><svg width="18" height="18" viewBox="0 0 18 18"><path d="M4 1l6 3M1 4l8 2" stroke="#222" stroke-width="1.400"/><path d="M8 3l5 2 3 7-6-3z" fill="#c01414" stroke="#d02525"/></svg>
      <span>Equal</span><svg width="18" height="18" viewBox="0 0 18 18"><path d="M3 7h12M3 11h12" stroke="#d02020" stroke-width="1.400"/></svg>
    </div>
  </aside>

  <!-- Taskbar -->
  <footer class="relative flex h-[40px] shrink-0 items-center bg-[linear-gradient(90deg,#a39380_0,#9c8a75_180px,#84705a_420px,#7d6a54_620px,#85725c_800px,#8b7861_1000px,rgba(138,116,90,.72)_1080px,rgba(138,116,90,.72)_1366px)]">
    <svg width="50" height="40" viewBox="0 728 50 40"><path d="M12 737.500l11-1.700V747H12zM24.500 735.600L38 734v13H24.500zM12 748.500h11v10.700l-11-1.700zM24.500 748.500H38V761l-13.500-1.700z" fill="#fff"/></svg>
    <div class="flex w-[62px] justify-center"><svg width="40" height="40" viewBox="61 728 40 40"><circle cx="81.500" cy="748.500" r="10.500" fill="none" stroke="#1c7fc0" stroke-width="6"/><circle cx="81.500" cy="748.500" r="10.500" fill="none" stroke="#4dc0f5" stroke-width="4.600"/><path d="M72 746.500h23v5H72z" fill="#4dc0f5"/><path d="M86 751.500h12v4.500H84z" fill="#98866f"/><path d="M94.500 737q-1-6-11-1-12 6-15 15-3 9 2 9 3 0 6-2" fill="none" stroke="#f3bd2b" stroke-width="2.300"/></svg></div>
    <div class="flex w-[62px] justify-center"><svg width="40" height="40" viewBox="123 728 40 40"><rect x="128" y="733" width="30" height="30" fill="#048a04"/><path d="M131 743h23l-1.500 16h-20z" fill="#fff"/><path d="M136 743q1-7 5-7t5 7M139 743q2-6 7-5 3 2 3 5" fill="none" stroke="#fff" stroke-width="1.300"/><path d="M136 747l5-.8v4.300h-5zM142 746l6-1v5.500h-6zM136 751.500h5v4l-5-.8zM142 751.500h6v5l-6-1z" fill="#048a04"/></svg></div>
    <div class="flex w-[62px] justify-center"><div class="flex h-[39px] w-[58px] items-center justify-center border border-[#c8beb0] bg-white/15"><svg width="38" height="38" viewBox="186 729 38 38"><path d="M190 737l8-1 2 2h18q2 0 2 3v18h-30z" fill="#f2dc84" stroke="#bd9b40"/><path d="M191 742h29v17h-29z" fill="#fbecaa"/><path d="M193 736h4v2h-4z" fill="#22a14a"/><path d="M201 738h4v2h-4z" fill="#dd4133"/><path d="M210 740h6v2h-6z" fill="#3d8ee0"/><path d="M193 763v-9q1-3 4-3h15q4 0 4 3v9h-5v-7h-13v7z" fill="#85c8ea" stroke="#3d8fb9"/><path d="M212 741v10M215 741v10" stroke="#ead17a"/></svg></div></div>
    <div class="flex w-[62px] justify-center"><div class="flex h-[39px] w-[58px] items-center justify-center border border-[#b5a897] bg-white/15"><svg width="38" height="38" viewBox="248 729 38 38"><path d="M254 737l14 2-2 14-14-3z" fill="#96d977"/><path d="M253 743l15-3 3 15-15 4z" fill="#8fc9f1" stroke="#6aa9d8" stroke-width=".7"/><path d="M263 743l15-5 4 16-14 6z" fill="#ffe65c" stroke="#d4b22f" stroke-width=".8"/></svg></div></div>
    <div class="flex w-[62px] justify-center"><svg width="40" height="40" viewBox="309 728 40 40"><circle cx="329" cy="748" r="14.500" fill="#3ba54d"/><path d="M316.500 740.500Q321 733.500 329 733.500T341.500 741H329a7 7 0 0 0-6 10z" fill="#d94638"/><path d="M341.500 741q3 5 1.500 10-3 11-14 11.500l6-11a7 7 0 0 0-1-10.500z" fill="#fdd13d"/><circle cx="329" cy="748" r="7" fill="#fff"/><circle cx="329" cy="748" r="5.500" fill="#4687f0"/></svg></div>
    <div class="flex w-[62px] justify-center"><svg width="40" height="40" viewBox="371 728 40 40"><ellipse cx="384" cy="749" rx="8" ry="6" fill="#d9b8a8"/><ellipse cx="388" cy="741" rx="10.500" ry="7.500" fill="#fff" stroke="#d82f2f" stroke-width="2" transform="rotate(-15 388 741)"/><path d="M382 739l15 14M391 735l2 20" stroke="#5a646e" stroke-width="1.900"/><g fill="none" stroke="#288bc5" stroke-width="2.300"><ellipse cx="394" cy="759" rx="2.600" ry="4.500" transform="rotate(12 394 759)"/><ellipse cx="400.500" cy="755" rx="2.600" ry="4.500" transform="rotate(-50 400.500 755)"/></g></svg></div>
    <div class="flex w-[62px] justify-center"><svg width="40" height="40" viewBox="433 728 40 40"><rect x="442" y="733.500" width="21.500" height="29" rx="1" fill="#c9e5f5" stroke="#7ab2d2"/><rect x="444" y="735" width="18" height="2" fill="#ee9b43"/><rect x="444" y="738" width="18" height="7" fill="#e9f5fa" stroke="#8bb8cf" stroke-width=".6"/><text x="456" y="744.500" font-size="7" fill="#333" font-family="Liberation Mono">0</text><path d="M445 748.500h17M445 752h12M445 755.500h12M445 759h12" stroke="#4b8fbb" stroke-width="2.200" stroke-dasharray="2.500 1"/><path d="M460.500 754v6" stroke="#ef8d2c" stroke-width="2.500"/></svg></div>
    <div class="flex w-[62px] justify-center"><div class="flex h-[39px] w-[58px] items-center justify-center border border-[#aea18f] bg-white/5"><svg width="38" height="38" viewBox="495 729 38 38"><path d="M501 738h23l3-1v23l-3 2h-23z" fill="#9ac9e8" stroke="#5a8eae"/><path d="M520 738v23M523.500 738v23" stroke="#5d9cc7"/><circle cx="511" cy="748.500" r="8.500" fill="#f2771a" stroke="#d8e6ee" stroke-width="1.300"/><path d="M508 743.500l8 5-8 5.500z" fill="#fff"/></svg></div></div>
    <div class="flex w-[62px] justify-center"><div class="flex h-[39px] w-[58px] items-center justify-center border border-[#f1ece5] bg-[#b3a695]"><svg width="32" height="32" viewBox="561 732 32 32"><rect x="561" y="732" width="32" height="32" fill="#e0f2f7"/><path d="M571 735h16l-2 5h-8v5h7l-2 5h-5v8l-6 2z" fill="#da8229"/><path d="M571 735l6 4v19l-6 2z" fill="#ad6119"/><path d="M577 735h10l-2 4h-8z" fill="#f2ae5b"/><text x="580" y="762.500" font-size="5.500" font-weight="bold" fill="#1584c3" font-family="Liberation Sans">360</text></svg></div></div>
    <svg class="ml-auto" width="150" height="40" viewBox="1103 728 150 40"><path d="M1111 751h8l-4-5z" fill="#fff"/><path d="M1133.500 756v-14.500q4-1.500 6 .5t7 .5l-2 3 .5 3q-5 2-7 .5t-4.500.500" fill="#fff" stroke="#3b3026" stroke-width="1"/><path d="M1133.500 741v15" stroke="#fff" stroke-width="1.500"/><path d="M1160 741l3.500 2.200-3.500 2.300-3.500-2.300zM1168 741l3.500 2.200-3.500 2.300-3.500-2.300zM1160 746.500l3.500 2.200-3.500 2.300-3.500-2.300zM1168 746.500l3.500 2.200-3.500 2.300-3.500-2.300zM1164 751l3.800 2.300-3.800 2.400-3.800-2.400z" fill="#fff" stroke="#4c4032" stroke-width=".5"/><g fill="none" stroke="#fff" stroke-width="1.500"><path d="M1182 741.500v3m4-3v3M1180.500 745h7v3.500h-7zM1184 749v6.500M1189.500 743h6v13h-6z"/></g><path d="M1191 741h3v2h-3z" fill="#fff"/><rect x="1190.500" y="746" width="4" height="9" fill="#fff" fill-opacity=".45"/><path d="M1205 752h2.500v3.500h-2.500zM1208.500 750h2.500v5.500h-2.500zM1212 747h2.500v8.500h-2.500zM1215.500 744h2.500v11.500h-2.500zM1219 741h2.500v14.500h-2.500z" fill="#fff" stroke="#352b20" stroke-width=".7"/><path d="M1229 745.500h3l4-4v15l-4-4h-3z" fill="#fff" stroke="#463a2e" stroke-width=".8"/><path d="M1237.500 745.500q2 3 0 6.500M1239.500 743.500q4 5 0 10.500" fill="none" stroke="#fff" stroke-width="1.300"/></svg>
    <div class="flex w-[34px] flex-col items-center font-['Open_Sans'] text-[11.500px] leading-[16.500px] text-white"><span>ENG</span><span>INTL</span></div>
    <div class="flex w-[79px] flex-col items-center pr-[7px] font-['Open_Sans'] text-[11.500px] leading-[16.500px] tracking-[-0.200px] text-white"><span>2:30 PM</span><span>3/29/2018</span></div>
  </footer>
</div>
</body>
</html>
